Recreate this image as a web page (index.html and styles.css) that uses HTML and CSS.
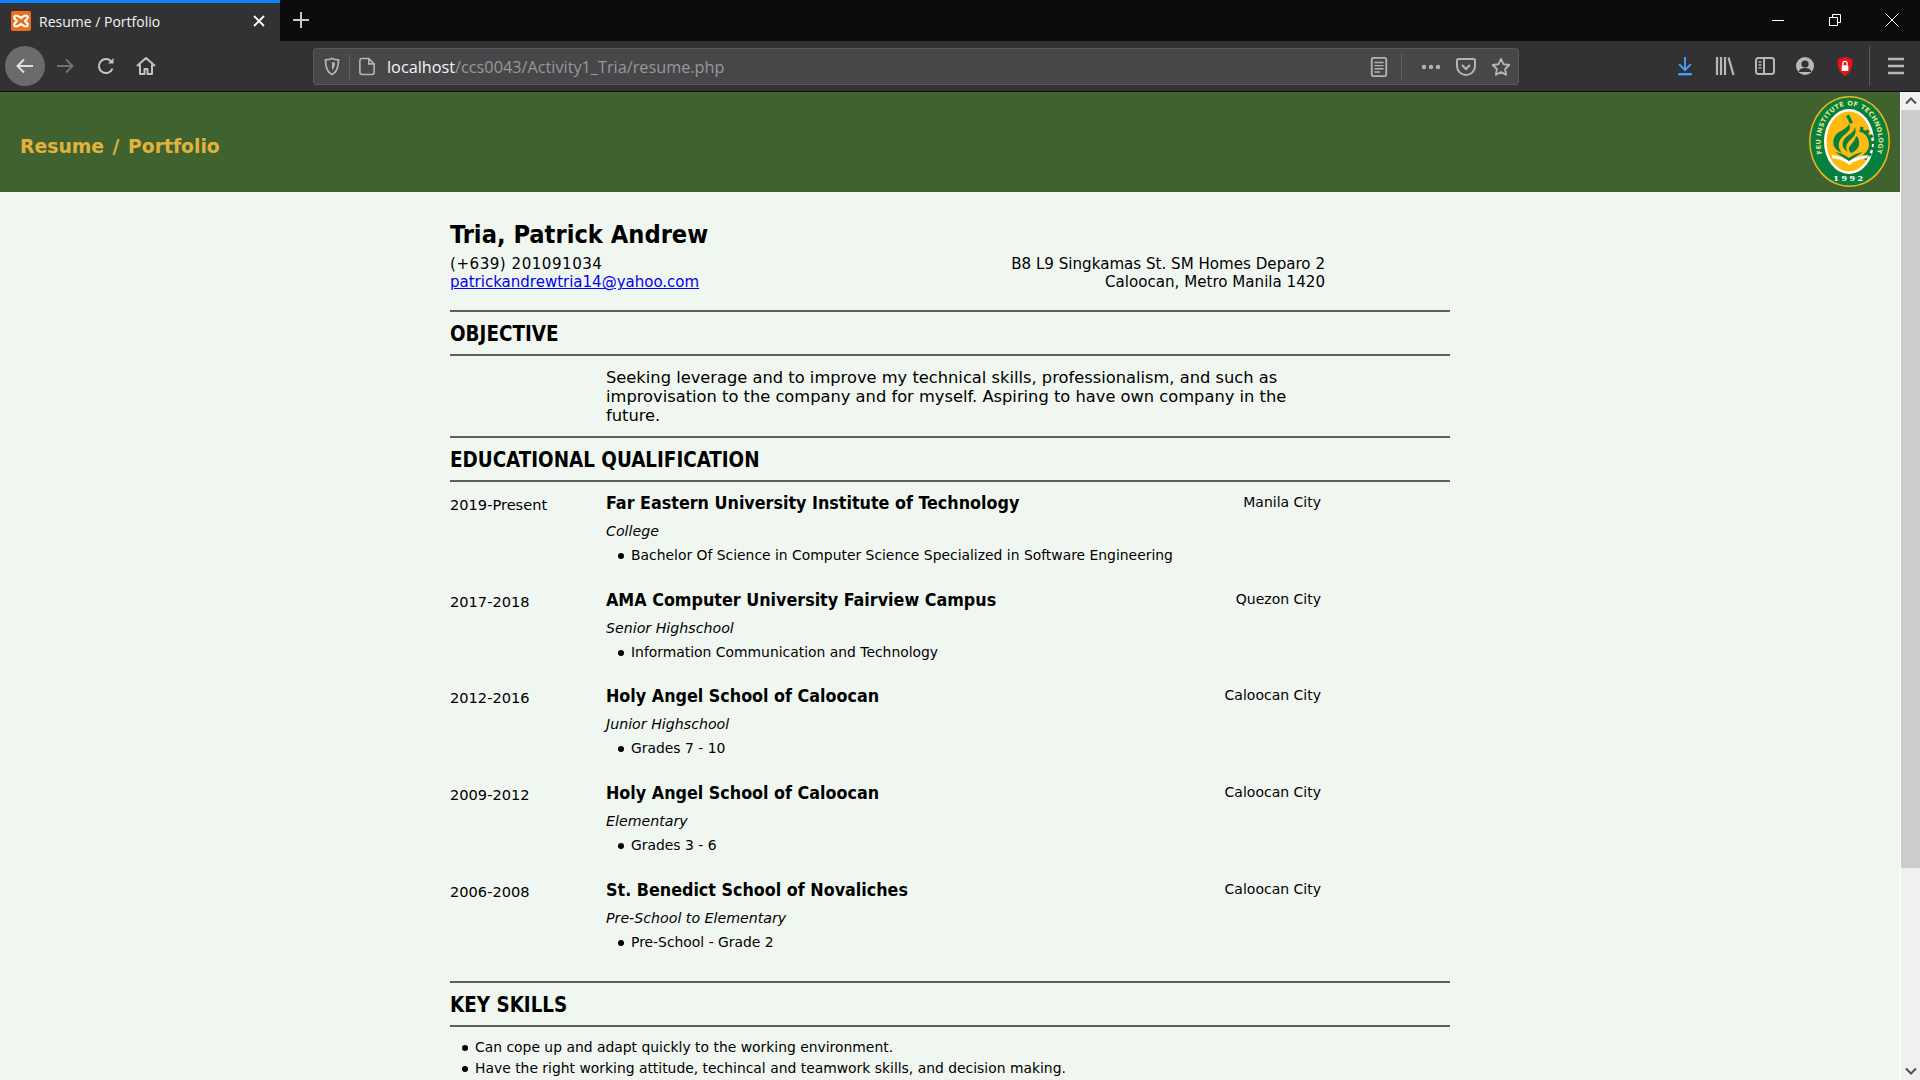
FILE: index.html
```html
<!DOCTYPE html>
<html lang="en">
<head>
    <meta charset="UTF-8">
    <title>Resume / Portfolio</title>
    <link rel="stylesheet" href="styles.css">
</head>
<body>
    <div class="tabbar">
        <div class="tab">
            <svg class="favicon" viewBox="0 0 20 20"><rect width="20" height="20" rx="2" fill="#e8701f"/><path d="M5 4.500c2 0 3 1 5 2.500 2-1.500 3-2.500 5-2.500s2.500 2.500.5 4L14 10l1.500 1.500c2 1.500 1.500 4-.5 4s-3-1-5-2.500c-2 1.500-3 2.500-5 2.500s-2.500-2.500-.5-4L6 10 4.500 8.500c-2-1.500-1.500-4 .5-4z" fill="none" stroke="#fff" stroke-width="2.200" stroke-linejoin="round"/></svg>
            <span class="tab-title">Resume / Portfolio</span>
            <svg class="tab-close" viewBox="0 0 12 12"><path d="M1 1l10 10M11 1L1 11" stroke="#fff" stroke-width="1.800"/></svg>
        </div>
        <svg class="new-tab" viewBox="0 0 18 18"><path d="M9 1v16M1 9h16" stroke="#c8c8ca" stroke-width="2"/></svg>
        <div class="window-controls">
            <svg viewBox="0 0 14 14"><path d="M1 7.500h12" stroke="#fff"/></svg>
            <svg viewBox="0 0 14 14"><path d="M1.500 4.500h8v8h-8zM4.500 4V1.500h8v8H10" fill="none" stroke="#fff"/></svg>
            <svg viewBox="0 0 14 14"><path d="M.5.500l13 13M13.500.500l-13 13" stroke="#fff"/></svg>
        </div>
    </div>

    <div class="toolbar">
        <div class="tool back">
            <svg viewBox="0 0 20 20"><path d="M18 10H3M9 3.500L2.500 10 9 16.500" fill="none" stroke="#e0e0e2" stroke-width="2"/></svg>
        </div>
        <div class="tool">
            <svg viewBox="0 0 20 20"><path d="M2 10h15M11 3.500l6.500 6.500-6.500 6.500" fill="none" stroke="#717173" stroke-width="2"/></svg>
        </div>
        <div class="tool reload">
            <svg viewBox="0 0 20 20"><path d="M16.500 12.500A7 7 0 1 1 15 5.200" fill="none" stroke="#c4c4c6" stroke-width="2"/><path d="M17.500 2v5.500H12z" fill="#c4c4c6"/></svg>
        </div>
        <div class="tool">
            <svg viewBox="0 0 20 20"><path d="M1 10l9-8 9 8M4 8.500V18h4.500v-5h3v5H16V8.500" fill="none" stroke="#c4c4c6" stroke-width="2" stroke-linejoin="round"/></svg>
        </div>

        <div class="urlbar">
            <svg class="url-icon" viewBox="0 0 16 18"><path d="M8 1c2 1 4 1.300 6.500 1.300C14.500 10 12.500 15 8 17 3.500 15 1.500 10 1.500 2.300 4 2.300 6 2 8 1z" fill="none" stroke="#b4b4b6" stroke-width="1.800"/><path d="M8 4.500c1 .4 2 .6 3 .6 0 3.500-1 6-3 7.500z" fill="#b4b4b6"/></svg>
            <span class="url-sep"></span>
            <svg class="url-icon" viewBox="0 0 18 20"><path d="M3.500 1H11l6 6v9.500A2.500 2.500 0 0 1 14.500 19h-11A2.500 2.500 0 0 1 1 16.500v-13A2.500 2.500 0 0 1 3.500 1zM11 1v6h6" fill="none" stroke="#b4b4b6" stroke-width="1.800"/></svg>
            <span class="url-text"><span class="url-host">localhost</span>/ccs0043/Activity1_Tria/resume.php</span>
            <svg class="url-action reader" viewBox="0 0 18 22"><rect x="1" y="1" width="16" height="20" rx="2" fill="none" stroke="#b4b4b6" stroke-width="2"/><path d="M4 6h10M4 9.500h10M4 13h10M4 16.500h6" stroke="#b4b4b6" stroke-width="1.600"/></svg>
            <span class="url-sep tall"></span>
            <svg class="url-action dots" viewBox="0 0 20 6"><circle cx="3" cy="3" r="2.200" fill="#b4b4b6"/><circle cx="10" cy="3" r="2.200" fill="#b4b4b6"/><circle cx="17" cy="3" r="2.200" fill="#b4b4b6"/></svg>
            <svg class="url-action pocket" viewBox="0 0 20 20"><path d="M2.500 2h15A1.500 1.500 0 0 1 19 3.500V9a9 9 0 0 1-18 0V3.500A1.500 1.500 0 0 1 2.500 2z" fill="none" stroke="#b4b4b6" stroke-width="2"/><path d="M6 8l4 4 4-4" fill="none" stroke="#b4b4b6" stroke-width="2.200"/></svg>
            <svg class="url-action star" viewBox="0 0 22 22"><path d="M11 2l2.800 6 6.400.8-4.700 4.400 1.200 6.500L11 16.500l-5.700 3.200 1.200-6.500L1.800 8.800 8.200 8z" fill="none" stroke="#b4b4b6" stroke-width="2" stroke-linejoin="round"/></svg>
        </div>

        <div class="tool-group">
            <div class="tool">
                <svg viewBox="0 0 20 22"><path d="M10 1v14M3.500 9l6.500 6.500L16.500 9" fill="none" stroke="#45a1ff" stroke-width="2"/><path d="M2.500 20h15" stroke="#45a1ff" stroke-width="2.600"/></svg>
            </div>
            <div class="tool">
                <svg viewBox="0 0 20 20"><path d="M2 1v18M6 1v18M10 1v18M13.500 1.500L18.500 19" stroke="#b8b8ba" stroke-width="2.200"/></svg>
            </div>
            <div class="tool">
                <svg viewBox="0 0 20 20"><rect x="1" y="2" width="18" height="16" rx="2.500" fill="none" stroke="#b8b8ba" stroke-width="2"/><path d="M9 2v16" stroke="#b8b8ba" stroke-width="2"/><path d="M3.500 6h3M3.500 9h3M3.500 12h3" stroke="#b8b8ba" stroke-width="1.500"/></svg>
            </div>
            <div class="tool">
                <svg viewBox="0 0 20 20"><circle cx="10" cy="10" r="9" fill="#b8b8ba"/><circle cx="10" cy="8" r="3.600" fill="#323234"/><path d="M3.500 16c1-3.200 3.500-4 6.500-4s5.500.8 6.500 4" fill="#323234"/></svg>
            </div>
            <div class="tool">
                <svg viewBox="0 0 20 24"><path d="M10 1l9 3c0 10-2 16-9 20C3 20 1 14 1 4z" fill="#e8141c"/><rect x="6" y="11" width="8" height="7" rx="1" fill="#fff"/><path d="M7.500 11V9a2.500 2.500 0 0 1 5 0v2" fill="none" stroke="#fff" stroke-width="1.500"/></svg>
            </div>
            <span class="tool-sep"></span>
            <div class="tool">
                <svg viewBox="0 0 20 18"><path d="M2 2h16M2 9h16M2 16h16" stroke="#b8b8ba" stroke-width="2.600"/></svg>
            </div>
        </div>
    </div>

    <div class="viewport">
        <div class="page">
            <header class="site-header">
                <h2 class="site-title">Resume / Portfolio</h2>
                <svg class="logo" viewBox="0 0 81 91">
                    <defs><path id="ringText" d="M13 57.600A29 36.500 0 1 1 68 57.600"/></defs>
                    <ellipse cx="40.500" cy="45.500" rx="40.500" ry="45.500" fill="#f1b517"/>
                    <ellipse cx="40.500" cy="45.500" rx="39" ry="44" fill="#07803f"/>
                    <ellipse cx="40" cy="45.500" rx="25" ry="32.500" fill="#fff"/>
                    <ellipse cx="40" cy="45.500" rx="22.500" ry="30" fill="#fdbb12"/>
                    <path d="M37 20l3-1.500 4 8-3 1.500z" fill="#07803f"/>
                    <path d="M40 28c3 5-1 8-6 12-5 5-6 11-1 17-8-3-11-10-7-17 3-5 11-6 14-12z" fill="#07803f"/>
                    <path d="M46 31c2 6-1 10-5 13-4 4-5 8-2 12-6-3-7-9-3-14 4-4 9-5 10-11z" fill="#07803f"/>
                    <path d="M47 40c-1 5-4 7-6 10-2 2-1 5 1 7 5-2 9-6 8-11 0-3-1-5-3-6z" fill="#07803f"/>
                    <path d="M51 34A14.500 14.500 0 0 1 55 60" fill="none" stroke="#07803f" stroke-width="3"/>
                    <path d="M51 33A15.500 15.500 0 0 1 55 62" fill="none" stroke="#07803f" stroke-width="5" stroke-dasharray="3 3"/>
                    <path d="M23 59c7 1 13 3 17 6 5-3 10-5 18-6v3c-7 1-13 3-18 7-4-4-10-6-17-7z" fill="#fff"/>
                    <path d="M26 56c6 1 10 3 14 6 4-3 8-5 14-6l-14 9z" fill="#07803f"/>
                    <text class="logo-ring"><textPath href="#ringText" startOffset="50%" text-anchor="middle">FEU INSTITUTE OF TECHNOLOGY</textPath></text>
                    <text class="logo-year" x="40.500" y="85" text-anchor="middle">1992</text>
                </svg>
            </header>

            <main class="resume">
                <h1 class="name">Tria, Patrick Andrew</h1>
                <div class="contact">
                    <div><span class="phone">(+639) 201091034</span><br><a href="#">patrickandrewtria14@yahoo.com</a></div>
                    <div class="address">B8 L9 Singkamas St. SM Homes Deparo 2<br>Caloocan, Metro Manila 1420</div>
                </div>

                <h3 class="section-title first">OBJECTIVE</h3>
                <p class="objective">Seeking leverage and to improve my technical skills, professionalism, and such as improvisation to the company and for myself. Aspiring to have own company in the future.</p>

                <h3 class="section-title">EDUCATIONAL QUALIFICATION</h3>
                <div class="education">
                    <div class="school">
                        <div class="years">2019-Present</div>
                        <div class="school-info">
                            <div class="school-name">Far Eastern University Institute of Technology</div>
                            <div class="level">College</div>
                            <ul><li>Bachelor Of Science in Computer Science Specialized in Software Engineering</li></ul>
                        </div>
                        <div class="city">Manila City</div>
                    </div>
                    <div class="school">
                        <div class="years">2017-2018</div>
                        <div class="school-info">
                            <div class="school-name">AMA Computer University Fairview Campus</div>
                            <div class="level">Senior Highschool</div>
                            <ul><li>Information Communication and Technology</li></ul>
                        </div>
                        <div class="city">Quezon City</div>
                    </div>
                    <div class="school">
                        <div class="years">2012-2016</div>
                        <div class="school-info">
                            <div class="school-name">Holy Angel School of Caloocan</div>
                            <div class="level">Junior Highschool</div>
                            <ul><li>Grades 7 - 10</li></ul>
                        </div>
                        <div class="city">Caloocan City</div>
                    </div>
                    <div class="school">
                        <div class="years">2009-2012</div>
                        <div class="school-info">
                            <div class="school-name">Holy Angel School of Caloocan</div>
                            <div class="level">Elementary</div>
                            <ul><li>Grades 3 - 6</li></ul>
                        </div>
                        <div class="city">Caloocan City</div>
                    </div>
                    <div class="school">
                        <div class="years">2006-2008</div>
                        <div class="school-info">
                            <div class="school-name">St. Benedict School of Novaliches</div>
                            <div class="level">Pre-School to Elementary</div>
                            <ul><li>Pre-School - Grade 2</li></ul>
                        </div>
                        <div class="city">Caloocan City</div>
                    </div>
                </div>

                <h3 class="section-title">KEY SKILLS</h3>
                <ul class="skills">
                    <li>Can cope up and adapt quickly to the working environment.</li>
                    <li>Have the right working attitude, techincal and teamwork skills, and decision making.</li>
                </ul>
            </main>
        </div>

        <div class="scrollbar">
            <svg class="arrow" viewBox="0 0 12 8"><path d="M1 6.500l5-5 5 5" fill="none" stroke="#505050" stroke-width="2"/></svg>
            <div class="track"><div class="thumb"></div></div>
            <svg class="arrow" viewBox="0 0 12 8"><path d="M1 1.500l5 5 5-5" fill="none" stroke="#505050" stroke-width="2"/></svg>
        </div>
    </div>
</body>
</html>
```

FILE: styles.css
```css
* {
    box-sizing: border-box;
}
html, body {
    margin: 0;
    height: 100vh;
    overflow: hidden;
}
body {
    display: flex;
    flex-direction: column;
    font-family: "DejaVu Sans", sans-serif;
    background-color: #323234;
}

/* browser chrome */
.tabbar {
    height: 41px;
    flex: none;
    display: flex;
    align-items: center;
    padding-bottom: 2px;
    background-color: #0c0c0d;
}
.tab {
    width: 280px;
    height: 41px;
    margin-bottom: -2px;
    display: flex;
    align-items: center;
    padding: 0 15px 2px 11px;
    background-color: #323234;
    border-top: 3px solid #0a84ff;
    color: #f4f4f5;
    font-family: "Open Sans", sans-serif;
    font-size: 14px;
}
.favicon {
    width: 20px;
    height: 20px;
    margin-right: 8px;
}
.tab-title {
    flex: 1;
}
.tab-close {
    width: 12px;
    height: 12px;
}
.new-tab {
    width: 18px;
    height: 18px;
    margin-left: 12px;
}
.window-controls {
    margin-left: auto;
    display: flex;
    align-items: center;
    gap: 43px;
    padding-right: 21px;
}
.window-controls svg {
    width: 14px;
    height: 14px;
}
.toolbar {
    height: 51px;
    flex: none;
    display: flex;
    align-items: center;
    padding: 0 4px 1px 5px;
    background-color: #323234;
    border-bottom: 1px solid #0c0c0d;
}
.tool {
    width: 40px;
    height: 40px;
    flex: none;
    display: flex;
    align-items: center;
    justify-content: center;
}
.tool svg {
    width: 20px;
    height: 20px;
}
.tool.back {
    border-radius: 50%;
    background-color: #6b6b6d;
}
.tool.reload {
    margin-left: 1px;
}
.urlbar {
    width: 1206px;
    height: 37px;
    margin: 2px 0 0 147px;
    display: flex;
    align-items: center;
    padding: 0 7px 0 10px;
    background-color: #474749;
    border: 1px solid #5a5a5c;
    border-radius: 3px;
}
.url-icon {
    width: 16px;
    height: 19px;
    flex: none;
}
.url-sep {
    width: 1px;
    height: 26px;
    margin: 0 9px 0 9px;
    background-color: #5e5e60;
}
.url-sep.tall {
    margin: 0 19px 0 13px;
}
.url-text {
    flex: 1;
    margin-left: 12px;
    color: #98989a;
    font-family: "Open Sans", sans-serif;
    font-size: 16.250px;
}
.url-host {
    color: #f4f4f5;
}
.url-action {
    flex: none;
}
.reader {
    width: 18px;
    height: 20px;
}
.dots {
    width: 20px;
    height: 6px;
    margin-right: 15px;
}
.pocket {
    width: 20px;
    height: 20px;
    margin-right: 15px;
}
.star {
    width: 20px;
    height: 20px;
}
.tool-group {
    margin-left: 146px;
    display: flex;
    align-items: center;
}
.tool-sep {
    width: 1px;
    height: 40px;
    margin: 0 6px 0 4px;
    background-color: #5a5a5c;
}

/* page */
.viewport {
    flex: 1;
    min-height: 0;
    display: flex;
}
.page {
    flex: 1;
    min-width: 0;
    overflow: hidden;
    background-color: #f0f7f0;
    color: #000;
}
.site-header {
    height: 100px;
    display: flex;
    align-items: center;
    justify-content: space-between;
    padding: 0 10px 0 20px;
    background-color: #3f622e;
}
.site-title {
    margin: 9px 0 0;
    color: #e3b23c;
    font-size: 18.800px;
    font-weight: bold;
    word-spacing: 2px;
}
.logo {
    width: 81px;
    height: 91px;
    margin-top: -1px;
}
.logo-ring {
    fill: #e9e38a;
    font-family: "DejaVu Sans", sans-serif;
    font-size: 6.500px;
    font-weight: bold;
    letter-spacing: .3px;
}
.logo-year {
    fill: #fff;
    font-family: "DejaVu Serif", serif;
    font-size: 8px;
    font-weight: bold;
    letter-spacing: 2.500px;
}
.resume {
    width: 1000px;
    margin: 0 auto;
    padding-top: 28px;
}
.name {
    margin: 0;
    font-family: "DejaVu Sans Condensed", "DejaVu Sans", sans-serif;
    font-size: 25.200px;
    line-height: 30px;
}
.contact {
    display: flex;
    justify-content: space-between;
    width: 875px;
    margin-top: 5px;
    font-size: 15.100px;
    line-height: 18.400px;
}
.phone {
    letter-spacing: .5px;
}
.contact a {
    color: #0000ee;
    font-size: 15px;
}
.address {
    text-align: right;
}
.section-title {
    margin: 0;
    padding: 13px 0 11px;
    border-top: 2px solid #5e5e5e;
    border-bottom: 2px solid #5e5e5e;
    font-family: "DejaVu Sans Condensed", "DejaVu Sans", sans-serif;
    font-size: 20.400px;
    line-height: 18px;
}
.section-title.first {
    margin-top: 18px;
}
.objective {
    width: 720px;
    margin: 12px 0 11px 156px;
    font-size: 16.300px;
    line-height: 19px;
}
.education {
    padding: 9px 0 7px;
}
.school {
    display: grid;
    grid-template-columns: 156px 1fr auto;
    width: 871px;
    height: 96.700px;
}
.years {
    padding-top: 4px;
    font-size: 14.600px;
    line-height: 20px;
}
.school-name {
    font-family: "DejaVu Sans Condensed", "DejaVu Sans", sans-serif;
    font-size: 17.750px;
    font-weight: bold;
    line-height: 24px;
}
.level {
    margin-top: 6px;
    font-size: 14.200px;
    font-style: italic;
    line-height: 20px;
}
.school-info ul, .skills {
    margin: 0;
    padding: 0;
    list-style: none;
}
.school-info li, .skills li {
    position: relative;
    font-size: 13.900px;
    line-height: 21px;
}
.school-info li {
    margin-top: 4px;
    padding-left: 25px;
}
.school-info li::before, .skills li::before {
    content: "";
    position: absolute;
    top: 8px;
    left: 12px;
    width: 6px;
    height: 6px;
    border-radius: 50%;
    background-color: #000;
}
.city {
    padding-top: 1px;
    font-size: 14px;
    line-height: 20px;
    text-align: right;
}
.skills {
    padding-top: 10px;
}
.skills li {
    padding-left: 25px;
}

/* fake scrollbar */
.scrollbar {
    width: 20px;
    flex: none;
    display: flex;
    flex-direction: column;
    align-items: center;
    background-color: #f0f0f0;
    border-left: 1px solid #fff;
}
.arrow {
    width: 12px;
    height: 8px;
    flex: none;
    margin: 5px 0;
}
.track {
    flex: 1;
    width: 100%;
}
.thumb {
    height: 758px;
    background-color: #cdcdcd;
}
```
